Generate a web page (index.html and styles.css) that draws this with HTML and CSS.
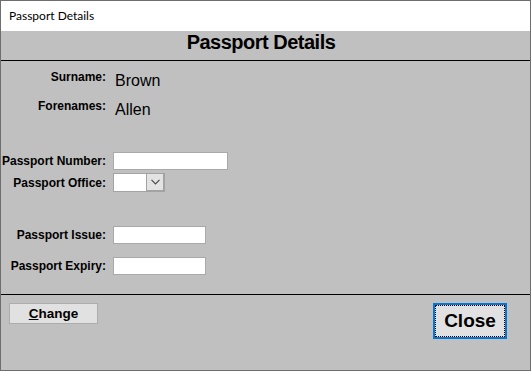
FILE: index.html
```html
<!doctype html>
<html lang="en">
	<head>
		<meta charset="UTF-8" />
		<title>Passport Details</title>
		<link rel="stylesheet" href="styles.css">
	</head>
	<body>
		<div class="window">
			<div class="titlebar">Passport Details</div>
			<div class="client">
				<h1 class="heading">Passport Details</h1>

				<div class="form">
					<div class="row row-text">
						<span class="label">Surname:</span>
						<span class="value">Brown</span>
					</div>
					<div class="row row-text">
						<span class="label">Forenames:</span>
						<span class="value">Allen</span>
					</div>

					<div class="row row-number">
						<span class="label">Passport Number:</span>
						<input class="field field-wide" type="text">
					</div>
					<div class="row row-office">
						<span class="label">Passport Office:</span>
						<div class="combo">
							<span class="combo-text"></span>
							<span class="combo-btn">
								<svg width="9" height="6" viewBox="0 0 9 6"><polyline points="0.5,0.8 4.5,4.8 8.5,0.8" fill="none" stroke="#4a4a4a" stroke-width="1.2"/></svg>
							</span>
						</div>
					</div>

					<div class="row row-issue">
						<span class="label">Passport Issue:</span>
						<input class="field field-date" type="text">
					</div>
					<div class="row row-expiry">
						<span class="label">Passport Expiry:</span>
						<input class="field field-date" type="text">
					</div>
				</div>

				<div class="footer">
					<button class="btn btn-change"><u>C</u>hange</button>
					<button class="btn btn-close">Close</button>
				</div>
			</div>
		</div>
	</body>
</html>
```

FILE: styles.css
```css
body {
	margin: 0;
	font-family: 'Liberation Sans', Arial, sans-serif;
	color: #000;
}
.window {
	width: 531px;
	height: 371px;
	box-sizing: border-box;
	border: 1px solid #6e6e6e;
	display: flex;
	flex-direction: column;
}
.titlebar {
	height: 30px;
	line-height: 30px;
	padding-left: 8px;
	background: #fff;
	font-family: 'Segoe UI', Lato, sans-serif;
	font-size: 12px;
}
.client {
	flex: 1;
	background: #c0c0c0;
	display: flex;
	flex-direction: column;
}
.heading {
	margin: 0;
	height: 29px;
	line-height: 23px;
	padding-right: 9px;
	text-align: center;
	font-size: 20px;
	letter-spacing: -0.5px;
	font-weight: bold;
	border-bottom: 1px solid #000;
}
.form {
	padding: 9px 0 19px;
	border-bottom: 1px solid #000;
}
.row {
	display: flex;
	align-items: center;
	gap: 7px;
}
.label {
	width: 105px;
	flex: none;
	text-align: right;
	font-size: 12px;
	font-weight: bold;
	line-height: 14px;
}
.row-text {
	height: 29px;
	align-items: flex-start;
}
.value {
	padding: 2px 0 0 2px;
	font-size: 16px;
	line-height: 18px;
}
.row-number {
	margin-top: 24px;
}
.row-office {
	margin-top: 3px;
}
.row-issue {
	margin-top: 34px;
}
.row-expiry {
	margin-top: 13px;
}
.field {
	height: 18px;
	box-sizing: border-box;
	margin: 0;
	padding: 0 2px;
	border: 1px solid #a9a9a9;
	background: #fff;
	outline: none;
}
.field-wide {
	width: 115px;
}
.field-date {
	width: 93px;
}
.combo {
	display: flex;
	width: 52px;
	height: 19px;
	box-sizing: border-box;
	border: 1px solid #a3a3a3;
	background: #fff;
}
.combo-text {
	flex: 1;
}
.combo-btn {
	width: 16px;
	display: flex;
	align-items: center;
	justify-content: center;
	background: #e3e3e3;
	border-left: 1px solid #a3a3a3;
	border-right: 1px solid #a3a3a3;
	border-bottom: 1px solid #a3a3a3;
}
.footer {
	flex: 1;
	display: flex;
	justify-content: space-between;
	align-items: flex-start;
	padding: 8px 23px 0 8px;
}
.btn {
	margin: 0;
	padding: 0;
	box-sizing: border-box;
	background: #e1e1e1;
	font-family: 'Liberation Sans', Arial, sans-serif;
	font-weight: bold;
	color: #000;
}
.btn-change {
	width: 89px;
	height: 21px;
	padding-bottom: 1px;
	border: 1px solid #adadad;
	font-size: 13.5px;
}
.btn-close {
	width: 74px;
	height: 36px;
	padding-bottom: 1px;
	border: 2px solid #0078d7;
	outline: 1px dotted #000;
	outline-offset: -3px;
	font-size: 19px;
}
```
